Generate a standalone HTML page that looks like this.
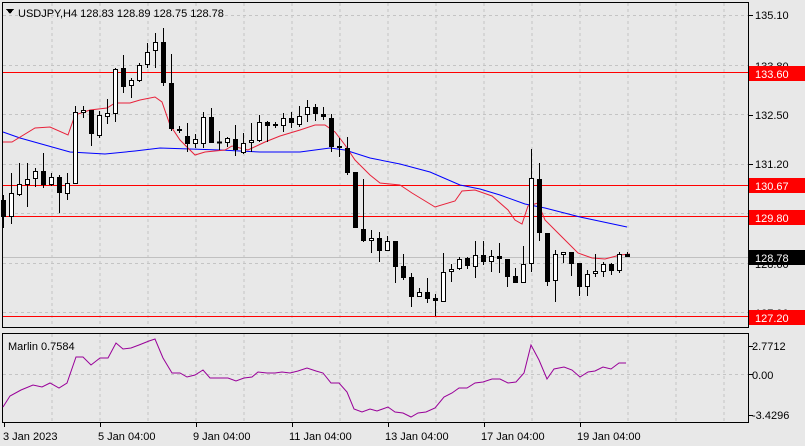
<!DOCTYPE html>
<html><head><meta charset="utf-8"><style>
body{margin:0;background:#e8e8e8;width:805px;height:446px;overflow:hidden;font-family:"Liberation Sans",sans-serif}
svg{position:absolute;left:0;top:0}
text{font-family:"Liberation Sans",sans-serif;font-size:11px;fill:#000}
.b{fill:#000}.w{fill:#fff;stroke:#000;stroke-width:1}
</style></head><body>
<svg width="805" height="446" viewBox="0 0 805 446" shape-rendering="crispEdges">
<rect width="805" height="446" fill="#e8e8e8"/>
<g stroke="#c4c4c4" stroke-dasharray="3,3" stroke-width="1">
<path d="M52 3V327M100 3V327M148 3V327M196 3V327M244 3V327M292 3V327M340 3V327M388 3V327M436 3V327M484 3V327M532 3V327M580 3V327M628 3V327M676 3V327M724 3V327"/>
<path d="M52 334V422M100 334V422M148 334V422M196 334V422M244 334V422M292 334V422M340 334V422M388 334V422M436 334V422M484 334V422M532 334V422M580 334V422M628 334V422M676 334V422M724 334V422"/>
<path d="M3 15.5H748M3 65.5H748M3 114.5H748M3 164.5H748M3 213.5H748M3 263.5H748M3 312.5H748M3 374.5H748"/>
</g>
<rect x="3" y="257" width="745" height="1" fill="#c0c0c0"/>
<g fill="#ff0000"><rect x="3" y="72" width="745" height="1"/><rect x="3" y="185" width="745" height="1"/><rect x="3" y="216" width="745" height="1"/><rect x="3" y="316" width="745" height="1"/></g>
<g fill="none" shape-rendering="auto" stroke-width="1">
<polyline stroke="#0000ff" points="3,132 20,138 45,145 70,152 105,154 135,151 160,148 220,150 260,152 300,152 330,148 345,150 370,158 400,164 430,172 460,185 480,189 500,195 525,204 545,208 580,217 627,227"/>
<polyline stroke="#e8213a" points="3,142 12,142 35,128 50,127 68,135 75,115 90,110 107,108 115,103 130,103 140,100 155,97 162,102 170,125 180,140 195,155 205,152 225,150 232,146 248,150 265,142 280,136 300,130 315,125 325,125 335,132 345,145 355,160 370,175 380,183 400,185 412,193 435,207 455,201 462,191 475,190 492,196 508,210 515,220 522,224 528,206 538,203 545,220 560,235 578,253 592,258 605,259 620,255 630,254"/>
</g>
<g id="c">
<rect class="b" x="3" y="195" width="1" height="33"/><rect class="b" x="1" y="200" width="5" height="17"/>
<rect class="b" x="11" y="173" width="1" height="51"/><rect class="w" x="9.5" y="193.5" width="4" height="23"/>
<rect class="b" x="19" y="163" width="1" height="33"/><rect class="w" x="17.5" y="184.5" width="4" height="10"/>
<rect class="b" x="27" y="163" width="1" height="44"/><rect class="w" x="25.5" y="179.5" width="4" height="5"/>
<rect class="b" x="35" y="168" width="1" height="19"/><rect class="w" x="33.5" y="171.5" width="4" height="7"/>
<rect class="b" x="43" y="153" width="1" height="35"/><rect class="b" x="41" y="171" width="5" height="14"/>
<rect class="b" x="51" y="173" width="1" height="13"/><rect class="w" x="49.5" y="177.5" width="4" height="7"/>
<rect class="b" x="59" y="175" width="1" height="38"/><rect class="b" x="57" y="177" width="5" height="16"/>
<rect class="b" x="67" y="173" width="1" height="27"/><rect class="w" x="65.5" y="183.5" width="4" height="10"/>
<rect class="b" x="75" y="106" width="1" height="77"/><rect class="w" x="73.5" y="112.5" width="4" height="71"/>
<rect class="b" x="83" y="106" width="1" height="12"/><rect class="w" x="81.5" y="110.5" width="4" height="2"/>
<rect class="b" x="91" y="110" width="1" height="36"/><rect class="b" x="89" y="110" width="5" height="24"/>
<rect class="b" x="99" y="111" width="1" height="27"/><rect class="w" x="97.5" y="115.5" width="4" height="20"/>
<rect class="b" x="107" y="99" width="1" height="25"/><rect class="w" x="105.5" y="113.5" width="4" height="3"/>
<rect class="b" x="115" y="68" width="1" height="54"/><rect class="w" x="113.5" y="69.5" width="4" height="44"/>
<rect class="b" x="123" y="55" width="1" height="38"/><rect class="b" x="121" y="68" width="5" height="19"/>
<rect class="b" x="131" y="78" width="1" height="20"/><rect class="w" x="129.5" y="80.5" width="4" height="5"/>
<rect class="b" x="139" y="63" width="1" height="19"/><rect class="w" x="137.5" y="65.5" width="4" height="15"/>
<rect class="b" x="147" y="43" width="1" height="25"/><rect class="w" x="145.5" y="52.5" width="4" height="12"/>
<rect class="b" x="155" y="33" width="1" height="35"/><rect class="w" x="153.5" y="42.5" width="4" height="8"/>
<rect class="b" x="163" y="28" width="1" height="58"/><rect class="b" x="161" y="42" width="5" height="41"/>
<rect class="b" x="171" y="54" width="1" height="77"/><rect class="b" x="169" y="83" width="5" height="46"/>
<rect class="b" x="179" y="126" width="1" height="7"/><rect class="w" x="177.5" y="129.5" width="4" height="1"/>
<rect class="b" x="187" y="123" width="1" height="29"/><rect class="b" x="185" y="136" width="5" height="8"/>
<rect class="b" x="195" y="134" width="1" height="14"/><rect class="w" x="193.5" y="139.5" width="4" height="4"/>
<rect class="b" x="203" y="112" width="1" height="36"/><rect class="w" x="201.5" y="117.5" width="4" height="26"/>
<rect class="b" x="211" y="108" width="1" height="35"/><rect class="b" x="209" y="117" width="5" height="26"/>
<rect class="b" x="219" y="131" width="1" height="19"/><rect class="w" x="217.5" y="142" width="4" height="1"/>
<rect class="b" x="227" y="137" width="1" height="10"/><rect class="w" x="225.5" y="138.5" width="4" height="4"/>
<rect class="b" x="235" y="125" width="1" height="31"/><rect class="b" x="233" y="139" width="5" height="11"/>
<rect class="b" x="243" y="133" width="1" height="21"/><rect class="w" x="241.5" y="143.5" width="4" height="9"/>
<rect class="b" x="251" y="123" width="1" height="29"/><rect class="w" x="249.5" y="140.5" width="4" height="2"/>
<rect class="b" x="259" y="115" width="1" height="27"/><rect class="w" x="257.5" y="122.5" width="4" height="18"/>
<rect class="b" x="267" y="121" width="1" height="21"/><rect class="b" x="265" y="122" width="5" height="4"/>
<rect class="b" x="275" y="122" width="1" height="6"/><rect class="b" x="273" y="124" width="5" height="2"/>
<rect class="b" x="283" y="113" width="1" height="19"/><rect class="w" x="281.5" y="118.5" width="4" height="7"/>
<rect class="b" x="291" y="112" width="1" height="16"/><rect class="b" x="289" y="118" width="5" height="5"/>
<rect class="b" x="299" y="106" width="1" height="21"/><rect class="w" x="297.5" y="116.5" width="4" height="8"/>
<rect class="b" x="307" y="100" width="1" height="22"/><rect class="w" x="305.5" y="107.5" width="4" height="7"/>
<rect class="b" x="315" y="104" width="1" height="17"/><rect class="b" x="313" y="107" width="5" height="7"/>
<rect class="b" x="323" y="107" width="1" height="13"/><rect class="b" x="321" y="114" width="5" height="3"/>
<rect class="b" x="331" y="114" width="1" height="38"/><rect class="b" x="329" y="118" width="5" height="29"/>
<rect class="b" x="339" y="138" width="1" height="19"/><rect class="b" x="337" y="146" width="5" height="2"/>
<rect class="b" x="347" y="137" width="1" height="38"/><rect class="b" x="345" y="148" width="5" height="25"/>
<rect class="b" x="355" y="172" width="1" height="56"/><rect class="b" x="353" y="172" width="5" height="56"/>
<rect class="b" x="363" y="179" width="1" height="63"/><rect class="b" x="361" y="229" width="5" height="12"/>
<rect class="b" x="371" y="230" width="1" height="23"/><rect class="w" x="369.5" y="238.5" width="4" height="2"/>
<rect class="b" x="379" y="232" width="1" height="30"/><rect class="b" x="377" y="238" width="5" height="13"/>
<rect class="b" x="387" y="236" width="1" height="15"/><rect class="w" x="385.5" y="241.5" width="4" height="9"/>
<rect class="b" x="395" y="241" width="1" height="42"/><rect class="b" x="393" y="241" width="5" height="26"/>
<rect class="b" x="403" y="254" width="1" height="26"/><rect class="b" x="401" y="266" width="5" height="12"/>
<rect class="b" x="411" y="273" width="1" height="34"/><rect class="b" x="409" y="277" width="5" height="20"/>
<rect class="b" x="419" y="288" width="1" height="9"/><rect class="w" x="417.5" y="292.5" width="4" height="4"/>
<rect class="b" x="427" y="278" width="1" height="25"/><rect class="b" x="425" y="292" width="5" height="7"/>
<rect class="b" x="435" y="294" width="1" height="22"/><rect class="b" x="433" y="298" width="5" height="3"/>
<rect class="b" x="443" y="253" width="1" height="49"/><rect class="w" x="441.5" y="272.5" width="4" height="29"/>
<rect class="b" x="451" y="264" width="1" height="18"/><rect class="w" x="449.5" y="269.5" width="4" height="2"/>
<rect class="b" x="459" y="257" width="1" height="13"/><rect class="w" x="457.5" y="259.5" width="4" height="9"/>
<rect class="b" x="467" y="257" width="1" height="12"/><rect class="b" x="465" y="258" width="5" height="8"/>
<rect class="b" x="475" y="241" width="1" height="37"/><rect class="w" x="473.5" y="255.5" width="4" height="11"/>
<rect class="b" x="483" y="241" width="1" height="24"/><rect class="b" x="481" y="255" width="5" height="7"/>
<rect class="b" x="491" y="250" width="1" height="22"/><rect class="w" x="489.5" y="256.5" width="4" height="5"/>
<rect class="b" x="499" y="243" width="1" height="30"/><rect class="b" x="497" y="256" width="5" height="3"/>
<rect class="b" x="507" y="259" width="1" height="28"/><rect class="b" x="505" y="259" width="5" height="18"/>
<rect class="b" x="515" y="268" width="1" height="15"/><rect class="b" x="513" y="276" width="5" height="7"/>
<rect class="b" x="523" y="246" width="1" height="37"/><rect class="w" x="521.5" y="264.5" width="4" height="18"/>
<rect class="b" x="531" y="149" width="1" height="123"/><rect class="w" x="529.5" y="178.5" width="4" height="85"/>
<rect class="b" x="539" y="163" width="1" height="78"/><rect class="b" x="537" y="179" width="5" height="54"/>
<rect class="b" x="547" y="233" width="1" height="53"/><rect class="b" x="545" y="233" width="5" height="49"/>
<rect class="b" x="555" y="250" width="1" height="52"/><rect class="w" x="553.5" y="254.5" width="4" height="26"/>
<rect class="b" x="563" y="252" width="1" height="11"/><rect class="w" x="561.5" y="252.5" width="4" height="2"/>
<rect class="b" x="571" y="252" width="1" height="24"/><rect class="b" x="569" y="252" width="5" height="12"/>
<rect class="b" x="579" y="263" width="1" height="33"/><rect class="b" x="577" y="263" width="5" height="24"/>
<rect class="b" x="587" y="270" width="1" height="26"/><rect class="w" x="585.5" y="274.5" width="4" height="12"/>
<rect class="b" x="595" y="254" width="1" height="23"/><rect class="w" x="593.5" y="271.5" width="4" height="2"/>
<rect class="b" x="603" y="262" width="1" height="15"/><rect class="w" x="601.5" y="264.5" width="4" height="7"/>
<rect class="b" x="611" y="263" width="1" height="12"/><rect class="b" x="609" y="264" width="5" height="7"/>
<rect class="b" x="619" y="252" width="1" height="21"/><rect class="w" x="617.5" y="254.5" width="4" height="16"/>
<rect class="b" x="627" y="252" width="1" height="5"/><rect class="b" x="625" y="254" width="5" height="3"/>
</g>
<g stroke="#000" fill="none"><rect x="2.5" y="2.5" width="746" height="325"/><rect x="2.5" y="333.5" width="746" height="89"/></g>
<g fill="#000"><path d="M749 15h4v1h-4zM749 66h4v1h-4zM749 115h4v1h-4zM749 164h4v1h-4zM749 214h4v1h-4zM749 264h4v1h-4zM749 313h4v1h-4zM749 346h4v1h-4zM749 374h4v1h-4zM749 415h4v1h-4z"/>
<path d="M4 423h1v4H4zM100 423h1v4h-1zM196 423h1v4h-1zM292 423h1v4h-1zM388 423h1v4h-1zM484 423h1v4h-1zM580 423h1v4h-1z"/></g>
<polyline shape-rendering="auto" fill="none" stroke="#990099" stroke-width="1" points="3,407 10,396 21,390 33,385 42,387 50,383 59,388 67,383 76,357 83,357 91,365 100,358 108,358 116,343 123,349 131,348 139,345 149,341 155,339 163,358 172,373 180,373 187,377 195,375 203,370 210,378 221,378 228,378 236,381 244,378 252,377 258,372 267,373 275,373 282,372 290,373 298,371 307,368 316,371 323,373 331,383 339,383 347,392 354,409 362,412 370,409 377,411 388,407 395,412 403,413 411,417 418,413 426,412 435,408 444,397 452,393 459,388 467,388 475,383 483,382 492,379 500,379 508,383 516,382 524,373 531,345 539,360 547,379 554,369 564,367 572,370 580,377 588,372 595,371 603,367 611,369 619,363 626,363"/>
<path d="M6 9h8l-4 5z" fill="#000"/>
<text x="18" y="17">USDJPY,H4  128.83 128.89 128.75 128.78</text>
<text x="8" y="350">Marlin 0.7584</text>
<text x="755" y="19">135.10</text>
<text x="755" y="70">133.80</text>
<text x="755" y="119">132.50</text>
<text x="755" y="168">131.20</text>
<text x="755" y="218">129.90</text>
<text x="755" y="268">128.60</text>
<text x="755" y="317">127.90</text>
<rect x="749" y="66" width="56" height="15" fill="#ff0000"/><text x="755" y="78" style="fill:#fff">133.60</text>
<rect x="749" y="178" width="56" height="15" fill="#ff0000"/><text x="755" y="190" style="fill:#fff">130.67</text>
<rect x="749" y="210" width="56" height="15" fill="#ff0000"/><text x="755" y="222" style="fill:#fff">129.80</text>
<rect x="749" y="250" width="56" height="15" fill="#000"/><text x="755" y="262" style="fill:#fff">128.78</text>
<rect x="749" y="310" width="56" height="15" fill="#ff0000"/><text x="755" y="322" style="fill:#fff">127.20</text>
<text x="752" y="350">2.7712</text>
<text x="752" y="379">0.00</text>
<text x="752" y="419">-3.4296</text>
<text x="3" y="440">3 Jan 2023</text>
<text x="98" y="440">5 Jan 04:00</text>
<text x="193" y="440">9 Jan 04:00</text>
<text x="289" y="440">11 Jan 04:00</text>
<text x="385" y="440">13 Jan 04:00</text>
<text x="481" y="440">17 Jan 04:00</text>
<text x="577" y="440">19 Jan 04:00</text>
</svg>
</body></html>
